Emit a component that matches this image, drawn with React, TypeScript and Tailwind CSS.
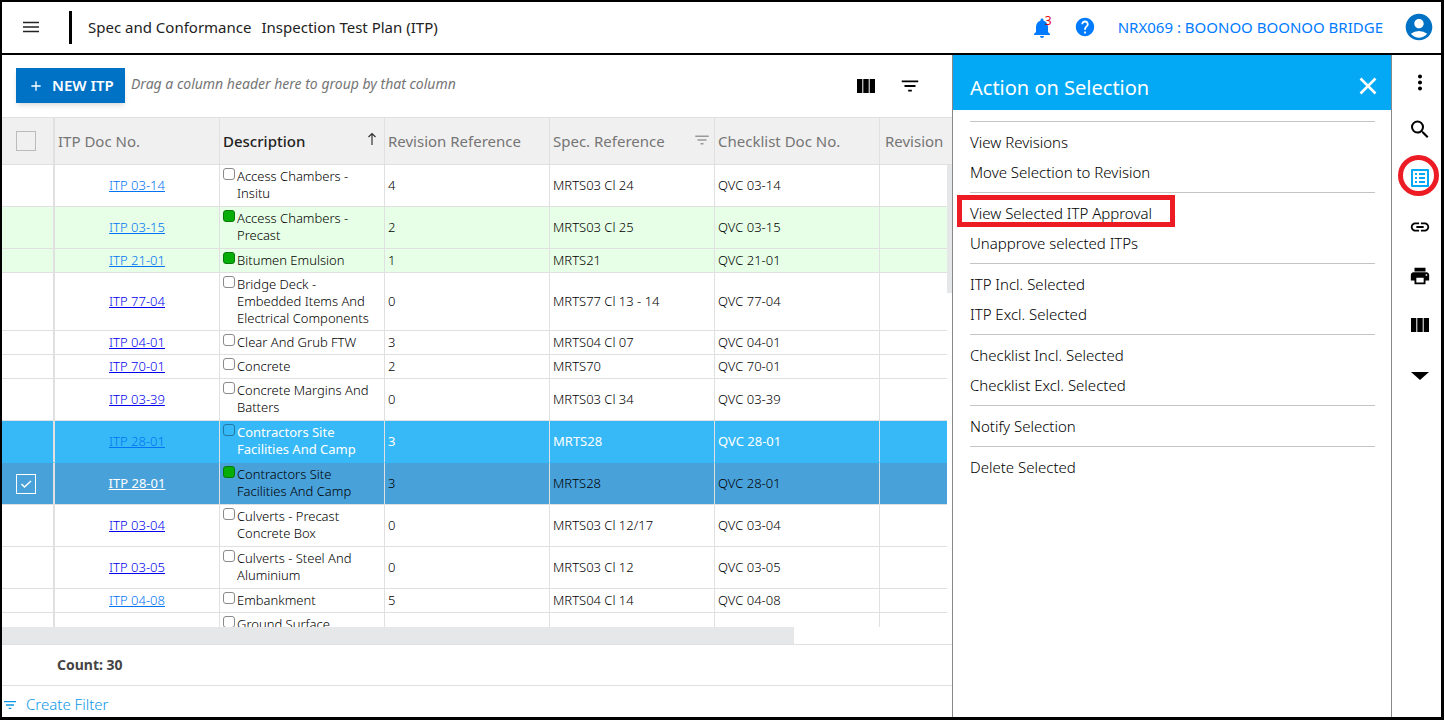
import React from "react";
import {
  MdAccountCircle,
  MdAdd,
  MdFilterList,
  MdHelp,
  MdLink,
  MdMoreVert,
  MdNotifications,
  MdOutlineListAlt,
  MdPrint,
  MdSearch,
} from "react-icons/md";

type Tone = "plain" | "approved" | "hover" | "selected";

interface Row {
  doc: string;
  lines: string[];
  revision: string;
  spec: string;
  checklist: string;
  tone?: Tone;
  visited?: boolean;
  flagged?: boolean;
}

const rows: Row[] = [
  { doc: "ITP 03-14", lines: ["Access Chambers -", "Insitu"], revision: "4", spec: "MRTS03 Cl 24", checklist: "QVC 03-14", visited: true },
  { doc: "ITP 03-15", lines: ["Access Chambers -", "Precast"], revision: "2", spec: "MRTS03 Cl 25", checklist: "QVC 03-15", tone: "approved", visited: true, flagged: true },
  { doc: "ITP 21-01", lines: ["Bitumen Emulsion"], revision: "1", spec: "MRTS21", checklist: "QVC 21-01", tone: "approved", visited: true, flagged: true },
  { doc: "ITP 77-04", lines: ["Bridge Deck -", "Embedded Items And", "Electrical Components"], revision: "0", spec: "MRTS77 Cl 13 - 14", checklist: "QVC 77-04" },
  { doc: "ITP 04-01", lines: ["Clear And Grub FTW"], revision: "3", spec: "MRTS04 Cl 07", checklist: "QVC 04-01" },
  { doc: "ITP 70-01", lines: ["Concrete"], revision: "2", spec: "MRTS70", checklist: "QVC 70-01" },
  { doc: "ITP 03-39", lines: ["Concrete Margins And", "Batters"], revision: "0", spec: "MRTS03 Cl 34", checklist: "QVC 03-39" },
  { doc: "ITP 28-01", lines: ["Contractors Site", "Facilities And Camp"], revision: "3", spec: "MRTS28", checklist: "QVC 28-01", tone: "hover", visited: true },
  { doc: "ITP 28-01", lines: ["Contractors Site", "Facilities And Camp"], revision: "3", spec: "MRTS28", checklist: "QVC 28-01", tone: "selected", flagged: true },
  { doc: "ITP 03-04", lines: ["Culverts - Precast", "Concrete Box"], revision: "0", spec: "MRTS03 Cl 12/17", checklist: "QVC 03-04" },
  { doc: "ITP 03-05", lines: ["Culverts - Steel And", "Aluminium"], revision: "0", spec: "MRTS03 Cl 12", checklist: "QVC 03-05" },
  { doc: "ITP 04-08", lines: ["Embankment"], revision: "5", spec: "MRTS04 Cl 14", checklist: "QVC 04-08", visited: true },
  { doc: "", lines: ["Ground Surface"], revision: "", spec: "", checklist: "" },
];

const rowTone: Record<Tone, string> = {
  plain: "bg-white text-black",
  approved: "bg-[#e6ffe6] text-black",
  hover: "bg-[#36b9f6] text-white font-normal",
  selected: "bg-[#49a1da] text-black",
};

const groups = [
  ["View Revisions", "Move Selection to Revision"],
  ["View Selected ITP Approval", "Unapprove selected ITPs"],
  ["ITP Incl. Selected", "ITP Excl. Selected"],
  ["Checklist Incl. Selected", "Checklist Excl. Selected"],
  ["Notify Selection"],
  ["Delete Selected"],
];

function ColumnsIcon() {
  return (
    <svg viewBox="0 0 18 14" className="h-3.5 w-[18px]" fill="currentColor" aria-hidden="true">
      <path d="M0 0h5.300v14H0zM6.300 0h5.400v14H6.300zM12.700 0H18v14h-5.300z" />
    </svg>
  );
}

function SortArrow() {
  return (
    <svg viewBox="0 0 10 14" className="mb-1 h-3.5 w-2.5" fill="none" stroke="#333" strokeWidth="1.2" aria-hidden="true">
      <path d="M5 13V1.500M1.500 5 5 1.500 8.500 5" />
    </svg>
  );
}

function linkColour(row: Row) {
  if (row.tone === "selected") return "text-white font-normal";
  return row.visited ? "text-[#0074f5] font-light" : "text-[#0000ee]";
}

function TopBar() {
  return (
    <header className="flex h-[53px] shrink-0 items-center border-b-2 border-black text-[15px]">
      <button aria-label="Menu" className="mb-0.5 ml-[21px] mr-[30px] text-[#222]">
        <svg viewBox="0 0 16 12" className="h-3 w-4" stroke="currentColor" strokeWidth="1.500" aria-hidden="true">
          <path d="M0 1.500h16M0 6h16M0 10.500h16" />
        </svg>
      </button>
      <span className="h-[33px] w-[3px] bg-black" />
      <h1 className="ml-4 flex gap-2.5 text-[#222]">
        <span>Spec and Conformance</span>
        <span>Inspection Test Plan (ITP)</span>
      </h1>
      <div className="ml-auto flex items-center pr-1.5 text-[#007bff]">
        <button aria-label="Notifications" className="relative mr-5">
          <MdNotifications size={24} />
          <span className="absolute -top-[3px] left-[15px] text-xs leading-4 text-red-600">3</span>
        </button>
        <button aria-label="Help" className="mb-0.5 mr-[22px]">
          <MdHelp size={22} />
        </button>
        <a href="#project" className="mr-5">NRX069 : BOONOO BOONOO BRIDGE</a>
        <button aria-label="Account" className="mb-0.5 text-[#0072c6]">
          <MdAccountCircle size={32} />
        </button>
      </div>
    </header>
  );
}

const headCell = "border-y border-[#e0e0e0] px-[3px] text-left font-normal";

function Grid() {
  return (
    <div className="flex min-h-0 flex-1 overflow-hidden">
      <div className="min-w-0 flex-1 overflow-hidden">
        <table className="w-full table-fixed border-separate border-spacing-0 text-[13px] font-light leading-[17px]">
          <colgroup>
            <col className="w-[53px]" />
            <col className="w-[165px]" />
            <col className="w-[165px]" />
            <col className="w-[165px]" />
            <col className="w-[165px]" />
            <col className="w-[165px]" />
            <col />
          </colgroup>
          <thead>
            <tr className="h-12 bg-[#f0f0f0] text-[15px] text-[#757575]">
              <th className="border-y border-r-2 border-[#e0e0e0] p-0 pl-3.5 text-left">
                <input type="checkbox" aria-label="Select all rows" className="block size-5 appearance-none border border-[#bbb]" />
              </th>
              <th className={`${headCell} border-r`}>ITP Doc No.</th>
              <th className={`${headCell} border-r text-[#222]`}>
                <span className="flex items-center justify-between font-medium">
                  Description
                  <span className="mr-1"><SortArrow /></span>
                </span>
              </th>
              <th className={`${headCell} border-r`}>Revision Reference</th>
              <th className={`${headCell} border-r`}>
                <span className="flex items-center justify-between">
                  Spec. Reference
                  <MdFilterList size={18} className="mb-0.5 text-[#999]" />
                </span>
              </th>
              <th className={`${headCell} border-r`}>Checklist Doc No.</th>
              <th className="whitespace-nowrap border-y border-[#e0e0e0] p-0 pl-[5px] text-left font-normal">Revision</th>
            </tr>
          </thead>
          <tbody>
            {rows.map((row, i) => {
              const tone = row.tone ?? "plain";
              const line = tone === "hover" ? "border-[#e0e0e0] border-b-[#36b9f6]" : "border-[#e0e0e0]";
              const height = row.lines.length === 3 ? "h-[58px]" : row.lines.length === 2 ? "h-[42px]" : "h-6";
              return (
                <tr key={i} className={`${rowTone[tone]} ${height}`}>
                  <td className={`border-b border-r-2 p-0 pl-3.5 ${line}`}>
                    {tone === "selected" && (
                      <span className="relative block size-5">
                        <input type="checkbox" defaultChecked aria-label="Select row" className="block size-5 appearance-none border border-white" />
                        <svg viewBox="0 0 20 20" className="pointer-events-none absolute inset-0" fill="none" stroke="white" strokeWidth="1.500" aria-hidden="true">
                          <path d="m5.500 10 3 3L15 7" />
                        </svg>
                      </span>
                    )}
                  </td>
                  <td className={`border-b border-r p-0 text-center ${line}`}>
                    {row.doc && <a href="#itp" className={`underline ${linkColour(row)}`}>{row.doc}</a>}
                  </td>
                  <td className={`border-b border-r py-[3px] pl-[3px] pr-0 align-top ${line}`}>
                    <label className="flex items-start gap-0.5">
                      <input
                        type="checkbox"
                        defaultChecked={row.flagged}
                        className={`size-3 shrink-0 appearance-none rounded-[3px] border ${row.flagged ? "border-[#067a06] bg-[#06ad06]" : tone === "hover" ? "border-[#2277a3]" : "border-[#8a8a8a] bg-white"}`}
                      />
                      <span className="whitespace-nowrap">
                        {row.lines.map((text) => (
                          <span key={text} className="block">{text}</span>
                        ))}
                      </span>
                    </label>
                  </td>
                  <td className={`border-b border-r px-[3px] py-0 ${line}`}>{row.revision}</td>
                  <td className={`border-b border-r px-[3px] py-0 ${line}`}>{row.spec}</td>
                  <td className={`border-b border-r px-[3px] py-0 ${line}`}>{row.checklist}</td>
                  <td className={`border-b p-0 ${line}`} />
                </tr>
              );
            })}
          </tbody>
        </table>
      </div>
      <div className="flex w-[5px] shrink-0 flex-col">
        <div className="h-12 border-y border-[#e0e0e0] bg-[#f0f0f0]" />
        <div className="h-32 bg-[#e6e7e9]" />
      </div>
    </div>
  );
}

function ActionPanel() {
  return (
    <aside className="w-[440px] shrink-0 border-x border-[#888] bg-white">
      <div className="flex h-[55px] items-center justify-between bg-[#03a9f4] pl-[17px] pr-3.5 pt-1.5 text-white">
        <h2 className="pt-1 text-xl">Action on Selection</h2>
        <button aria-label="Close panel">
          <svg viewBox="0 0 18 18" className="size-[18px]" fill="none" stroke="currentColor" strokeWidth="2.600" aria-hidden="true">
            <path d="M1.500 1.500l15 15M16.500 1.500l-15 15" />
          </svg>
        </button>
      </div>
      <div className="pl-[17px] pr-4 pt-[11px]">
        {groups.map((items) => (
          <ul key={items[0]} className="border-t border-[#c4c4c4] py-[5px]">
            {items.map((item) => (
              <li key={item} className="relative h-[30px]">
                <button className="flex h-[30px] w-full items-center text-left text-[15px] font-light text-black">{item}</button>
                {item === "View Selected ITP Approval" && (
                  <span className="pointer-events-none absolute -left-[13px] -top-[3px] h-8 w-[218px] border-[5px] border-[#ed1c24]" />
                )}
              </li>
            ))}
          </ul>
        ))}
      </div>
    </aside>
  );
}

const railButton = "flex size-6 items-center justify-center";

function Rail() {
  return (
    <nav aria-label="Tools" className="flex w-[49px] shrink-0 flex-col items-center gap-[25px] pl-1.5 pt-[15px] text-black">
      <button aria-label="More" className={`${railButton} -mb-0.5`}><MdMoreVert size={27} /></button>
      <button aria-label="Search" className={railButton}><MdSearch size={25} /></button>
      <button aria-label="Actions" className={`${railButton} relative text-[#03a9f4]`}>
        <MdOutlineListAlt size={24} />
        <span className="pointer-events-none absolute -left-2.5 -top-[11px] size-[41px] rounded-full border-[5px] border-[#ed1c24]" />
      </button>
      <button aria-label="Link" className={railButton}><MdLink size={22} /></button>
      <button aria-label="Print" className={railButton}><MdPrint size={22} /></button>
      <button aria-label="Columns" className={railButton}><ColumnsIcon /></button>
      <button aria-label="Expand" className={railButton}>
        <svg viewBox="0 0 24 24" className="size-6" fill="currentColor" aria-hidden="true">
          <path d="M3 10h18l-9 8z" />
        </svg>
      </button>
    </nav>
  );
}

export default function App() {
  return (
    <div className="h-screen bg-white pb-px pr-px font-['Noto_Sans',sans-serif]">
      <div className="flex h-full flex-col border-2 border-b-[3px] border-r-[3px] border-black">
        <TopBar />
        <div className="flex min-h-0 flex-1">
          <main className="flex min-w-0 flex-1 flex-col">
            <div className="flex h-[62px] shrink-0 items-center pb-px pl-3.5 pr-[31px]">
              <button className="flex h-[35px] w-[109px] items-center gap-2 bg-[#0072c6] pl-3 text-[15px] font-semibold text-white shadow-md">
                <MdAdd size={16} />
                NEW ITP
              </button>
              <p className="mb-1 ml-1.5 text-sm italic text-[#757575]">Drag a column header here to group by that column</p>
              <div className="ml-auto flex items-center gap-6 text-black">
                <button aria-label="Choose columns"><ColumnsIcon /></button>
                <button aria-label="Filter"><MdFilterList size={22} /></button>
              </div>
            </div>
            <Grid />
            <div className="h-[17px] shrink-0">
              <div className="h-full w-5/6 bg-[#e6e7e9]" />
            </div>
            <div className="flex h-[41px] shrink-0 items-center border-t border-[#e0e0e0] pl-[55px] text-sm font-bold text-[#444]">Count: 30</div>
            <div className="flex h-8 shrink-0 items-center border-t border-[#e0e0e0] text-[15px] font-light text-[#0a96e6]">
              <button className="flex items-center gap-2 pt-1.5">
                <MdFilterList size={16} />
                Create Filter
              </button>
            </div>
          </main>
          <ActionPanel />
          <Rail />
        </div>
      </div>
    </div>
  );
}
